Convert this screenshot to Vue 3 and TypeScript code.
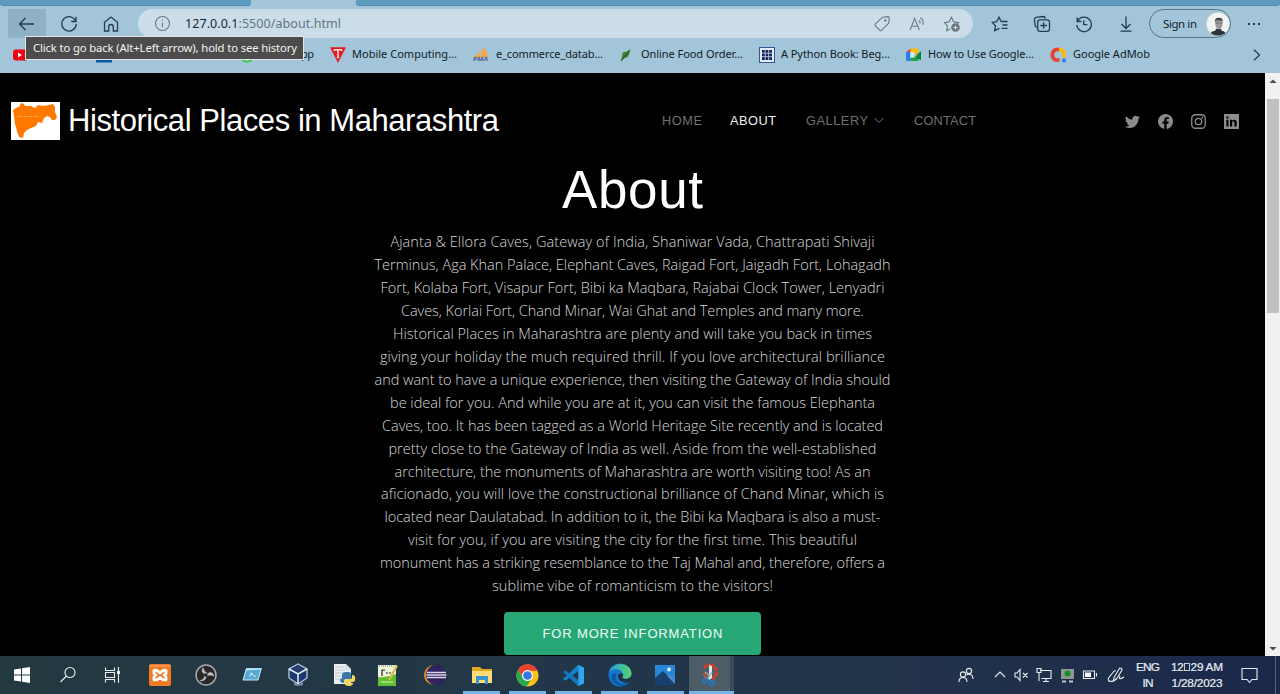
<script setup lang="ts">
import type { Directive } from 'vue'

// Spreads the letters of a text so that it fills the given width in pixels.
const vFit: Directive<HTMLElement, number> = {
  mounted(el, binding) {
    const count = (el.textContent ?? '').trim().length
    const natural = el.getBoundingClientRect().width
    if (count < 2) return
    const spacing = (binding.value - natural) / (count - 1)
    el.style.letterSpacing = `${spacing.toFixed(4)}px`
    el.style.marginRight = `${(-spacing).toFixed(4)}px`
  },
}

interface Line { text: string; width: number }

const lines: Line[] = [
  { text: 'Ajanta & Ellora Caves, Gateway of India, Shaniwar Vada, Chattrapati Shivaji', width: 484 },
  { text: 'Terminus, Aga Khan Palace, Elephant Caves, Raigad Fort, Jaigadh Fort, Lohagadh', width: 516 },
  { text: 'Fort, Kolaba Fort, Visapur Fort, Bibi ka Maqbara, Rajabai Clock Tower, Lenyadri', width: 504 },
  { text: 'Caves, Korlai Fort, Chand Minar, Wai Ghat and Temples and many more.', width: 463 },
  { text: 'Historical Places in Maharashtra are plenty and will take you back in times', width: 479 },
  { text: 'giving your holiday the much required thrill. If you love architectural brilliance', width: 505 },
  { text: 'and want to have a unique experience, then visiting the Gateway of India should', width: 516 },
  { text: 'be ideal for you. And while you are at it, you can visit the famous Elephanta', width: 485 },
  { text: 'Caves, too. It has been tagged as a World Heritage Site recently and is located', width: 501 },
  { text: 'pretty close to the Gateway of India as well. Aside from the well-established', width: 488 },
  { text: 'architecture, the monuments of Maharashtra are worth visiting too! As an', width: 476 },
  { text: 'aficionado, you will love the constructional brilliance of Chand Minar, which is', width: 503 },
  { text: 'located near Daulatabad. In addition to it, the Bibi ka Maqbara is also a must-', width: 496 },
  { text: 'visit for you, if you are visiting the city for the first time. This beautiful', width: 449 },
  { text: 'monument has a striking resemblance to the Taj Mahal and, therefore, offers a', width: 505 },
  { text: 'sublime vibe of romanticism to the visitors!', width: 281 },
]
</script>

<template>
  <div class="screen">
    <div class="tabs"><i></i><b></b><i></i></div>

    <header class="toolbar">
      <div class="cell back">
        <svg width="18" height="18" viewBox="0 0 18 18" class="ln"><path d="M7.500 3 1.500 9l6 6M1.500 9H16" /></svg>
      </div>
      <div class="cell">
        <svg width="18" height="18" viewBox="0 0 18 18" class="ln"><path d="M15.700 6.200A7.200 7.200 0 1 0 16.200 9M16 1.800v4.700h-4.700" /></svg>
      </div>
      <div class="cell">
        <svg width="18" height="18" viewBox="0 0 18 18" class="ln"><path d="M2.500 7.300 9 2l6.500 5.300V16H11.300v-4.200a2.300 2.300 0 0 0-4.600 0V16H2.500z" /></svg>
      </div>
      <div class="address">
        <svg class="gr info" width="17" height="17" viewBox="0 0 17 17"><circle cx="8.500" cy="8.500" r="7" /><path d="M8.500 7.500v4.700M8.500 4.500v1.300" /></svg>
        <span class="url"><span v-fit="156"><em>127.0.0.1</em>:5500/about.html</span></span>
        <div class="abtns">
          <svg class="gr" width="18" height="18" viewBox="0 0 18 18"><path d="M9.600 2.200 15 1.600q1.300 0 1.300 1.300l-.6 5.300-7 7q-1 .9-2 0L2.400 10.900q-.9-1 0-2z" /><circle cx="12.300" cy="5.600" r=".7" /></svg>
          <svg class="gr" width="18" height="18" viewBox="0 0 18 18"><path d="M2 15 6.700 3.500 11.400 15M3.600 11.200h6.200M11 5.500q1.500 1.300 1 3.200M12.300 2.700q4 2.600 2.500 7" /></svg>
          <svg class="gr" width="18" height="18" viewBox="0 0 18 18"><path d="M7 14 3.700 15.700l.7-4.700L1.500 7.600l4.600-.7L8.500 2.300l2.300 4.600 4.800.7-1.200 1.200" /><circle cx="12.500" cy="12.500" r="4.300" fill="#6b747a" stroke="none" /><path d="M12.500 10.500v4M10.500 12.500h4" stroke="#dce8ef" /></svg>
        </div>
      </div>
      <div class="right">
        <svg class="ln" width="18" height="18" viewBox="0 0 18 18"><path d="M10.200 6.800 8 2.200 5.700 6.700l-4.500.7 3.300 3.400-.8 4.900 4.700-2.400M10.500 6.500H16.500M11.500 10h5M10.500 13.300h6" /></svg>
        <svg class="ln" width="18" height="18" viewBox="0 0 18 18"><path d="M4 12.500Q2.500 12 2.200 10.600L1.400 5Q1.300 2.700 3.200 2.300L9.700 1.500Q12 1.500 12.500 3.500" /><rect x="4.700" y="4.800" width="11.800" height="11.600" rx="2.300" /><path d="M10.600 7.200v6.600M7.300 10.500h6.600" /></svg>
        <svg class="ln" width="18" height="18" viewBox="0 0 18 18"><path d="M2.200 2.500v4h4M2.500 6.200A7.300 7.300 0 1 1 1.800 10M8.800 5.200v4.400h3.600" /></svg>
        <svg class="ln" width="18" height="18" viewBox="0 0 18 18"><path d="M9 1.500v12M4.500 9 9 13.500 13.500 9M3.500 16.200h11" /></svg>
      </div>
      <div class="signin">
        <span v-fit="34">Sign in</span>
        <svg width="24" height="24" viewBox="0 0 24 24">
          <defs><clipPath id="face"><circle cx="12" cy="12" r="11.500" /></clipPath></defs>
          <circle cx="12" cy="12" r="11.500" fill="#f3f3f1" />
          <g clip-path="url(#face)"><path d="M4 24q0-5 5-5l1-2h5l1 2q4 0 4 5z" fill="#30343a" /><path d="M9 9q0-3 4-3 3.600.3 3.400 3.500V13q-.6 4-3.200 4.500Q10 17 9.400 13z" fill="#999b9c" /><path d="M8.800 10Q8.500 6 12.500 5.800q4.300-.4 4.500 4l-1-1.300-6-.2z" fill="#40464a" /><path d="M10.500 11h2m1.700 0h2" stroke="#5b6064" /></g>
        </svg>
      </div>
      <div class="dots"><u></u><u></u><u></u></div>
    </header>

    <nav class="bookmarks">
      <span class="bi"><svg width="16" height="16" viewBox="0 0 16 16"><rect x="2" y="2.500" width="15" height="11" rx="3" fill="#f00012" /><path d="M7 5.500v5l4-2.500z" fill="#fff" /></svg></span>
      <span></span>
      <span class="bi"><svg width="16" height="16" viewBox="0 0 16 16"><rect width="16" height="15.500" rx="1" fill="#0b58a9" /></svg></span>
      <span></span>
      <span class="bi"><svg width="16" height="16" viewBox="0 0 16 16"><circle cx="7" cy="8" r="7.500" fill="#35c34a" /><circle cx="7" cy="8" r="5.500" fill="#fff" /></svg></span>
      <span class="bt end"><span v-fit="13">pp</span></span>
      <span class="bi"><svg width="16" height="16" viewBox="0 0 16 16"><path d="M0 .2h16L8 16z" fill="#e91925" /><path d="M4.500 4V2.800h7V4M8 3v7.500M6.800 10.500h2.400" fill="none" stroke="#ffdcda" stroke-width="1.500" /></svg></span>
      <span class="bt"><span v-fit="105">Mobile Computing...</span></span>
      <span class="bi"><svg width="17" height="16" viewBox="0 0 17 16"><path d="M2 9Q5 8 7 4v5zM8 9Q7 5 10 1q4 2 5 8z" fill="#efaa4b" /><path d="M1 9.500h14" stroke="#e79e48" /><text x="0" y="14.300" font-size="5.500" font-style="italic" font-weight="bold" fill="#50628b" textLength="15" lengthAdjust="spacingAndGlyphs">PMA</text></svg></span>
      <span class="bt"><span v-fit="107">e_commerce_datab...</span></span>
      <span class="bi leaf"><svg width="16" height="16" viewBox="0 0 16 16"><path d="M4 9.500Q4 4 8 5L12.500 2 11 7.500Q11 10 7 11L3 14z" fill="#3f8136" /><path d="m3 14 8-10" stroke="#205621" /></svg></span>
      <span class="bt"><span v-fit="102">Online Food Order...</span></span>
      <span class="bi"><svg width="16" height="16" viewBox="0 0 16 16"><rect x=".5" y=".5" width="15" height="15" fill="#e5eef8" stroke="#345493" /><path d="M3 3h10v10H3z" fill="#17255e" /><path d="M6.200 3v10M9.700 3v10M3 6.200h10M3 9.700h10" stroke="#d3deee" stroke-width=".8" /></svg></span>
      <span class="bt"><span v-fit="109">A Python Book: Beg...</span></span>
      <span class="bi"><svg width="16" height="16" viewBox="0 0 16 16"><path d="M0 5h4.500v9H1.500Q0 14 0 12.500z" fill="#2581ef" /><path d="M4.500 1.500V5H0z" fill="#e94335" /><path d="M4.500 1.500H11q1.500 0 1.500 1.500v5L8 5.500H4.500z" fill="#f9bc05" /><path d="M4.500 10.500H8l4.500-3v5Q12.500 14 11 14H4.500z" fill="#23a64c" /><path d="m10.500 8 4.500-4v9.500L10.500 11z" fill="#118438" /><path d="M4.500 5H8v5.500H4.500z" fill="#dfeaef" /></svg></span>
      <span class="bt"><span v-fit="106">How to Use Google...</span></span>
      <span class="bi"><svg width="17" height="16" viewBox="0 0 17 16"><path d="M9.500 2.500Q4 1.500 2.700 6 1.500 11 5.500 13h4" fill="none" stroke="#e64335" stroke-width="3.700" /><path d="M9 2.500q5 0 5 5v3" fill="none" stroke="#fabb05" stroke-width="3.600" /><circle cx="14" cy="13.500" r="2.200" fill="#4285e9" /></svg></span>
      <span class="bt"><span v-fit="77">Google AdMob</span></span>
      <svg class="ln more" width="10" height="14" viewBox="0 0 10 14"><path d="m2 1.800 5.500 5.200L2 12.200" /></svg>
    </nav>
    <div class="tooltip"><span v-fit="264">Click to go back (Alt+Left arrow), hold to see history</span></div>

    <div class="view">
      <main class="page">
        <div class="site">
          <svg class="map" width="49" height="38" viewBox="0 0 49 38"><path fill="#fff" d="M0 0h49v38H0z" /><path d="m9 3 1-2 3 1 1 2 6 0 4 2 3-3 5 1 6-1 4-1 2 3 0 5 2 5-2 3-3 0-2-3-3-1-3 2-2 5-4-1-2 4-5 2-4 2-3 3-1 5-4-1-2-6-2-7-1-8-1-6 3-2 4-2z" fill="#ff7900" /><path d="M7 14.500h20" stroke="#ffad60" stroke-dasharray="2 1" /></svg>
          <h1><span v-fit="431">Historical Places in Maharashtra</span></h1>
          <ul class="menu">
            <li><span v-fit="40">HOME</span></li>
            <li class="on"><span v-fit="46">ABOUT</span></li>
            <li><span v-fit="62">GALLERY</span></li>
            <li><svg width="12" height="9" viewBox="0 0 12 9"><path d="m1.500 2 4.500 4.500L10.500 2" fill="none" stroke="#777" stroke-width="1" /></svg></li>
            <li><span v-fit="62">CONTACT</span></li>
          </ul>
          <div class="social">
            <svg width="15" height="15" viewBox="0 0 16 16"><path d="M5 15c6 0 9.300-5 9.300-9.300v-.4A6.700 6.700 0 0 0 16 3.500a6.600 6.600 0 0 1-1.900.5 3.300 3.300 0 0 0 1.400-1.800 6.500 6.500 0 0 1-2 .8 3.300 3.300 0 0 0-5.600 3A9.300 9.300 0 0 1 1.100 2.500a3.300 3.300 0 0 0 1 4.400 3.200 3.200 0 0 1-1.500-.4 3.300 3.300 0 0 0 2.700 3.200 3.200 3.200 0 0 1-1.500.1 3.300 3.300 0 0 0 3.100 2.300A6.600 6.600 0 0 1 0 13.600 9.300 9.300 0 0 0 5 15" /></svg>
            <svg width="15" height="15" viewBox="0 0 16 16"><path d="M16 8a8 8 0 1 0-9.300 7.900v-5.600h-2V8h2V6.300c0-2 1.200-3.100 3-3.100.9 0 1.800.2 1.800.2v2h-1c-1 0-1.300.6-1.300 1.200V8h2.200l-.4 2.300H9.200v5.600A8 8 0 0 0 16 8" /></svg>
            <svg class="insta" width="15" height="15" viewBox="0 0 16 16"><rect x=".8" y=".8" width="14.400" height="14.400" rx="3.800" /><circle cx="8" cy="8" r="3.400" /><circle class="fill" cx="12.200" cy="3.900" r=".9" /></svg>
            <svg width="15" height="15" viewBox="0 0 16 16"><path fill-rule="evenodd" d="M0 0h16v16H0zM2.500 6.200v7.200h2.300V6.200zM3.650 2.400a1.250 1.250 0 1 0 0 2.500 1.250 1.250 0 0 0 0-2.500M6.400 6.200v7.200h2.300V9.500c0-2 2.400-2 2.400 0v3.900h2.400V8.700c0-3.100-3.500-3.400-4.800-1.500v-1z" /></svg>
          </div>
        </div>

        <h2><span v-fit="141">About</span></h2>
        <div class="copy">
          <div v-for="line in lines" :key="line.text" class="line"><span v-fit="line.width">{{ line.text }}</span></div>
        </div>
        <div class="button"><span v-fit="180">FOR MORE INFORMATION</span></div>
      </main>
      <aside class="scroll">
        <svg width="15" height="26" viewBox="0 0 15 26"><path d="m4.300 10 3.700-3.500 3.700 3.500z" fill="#505050" /></svg>
        <div class="thumb"></div>
        <svg class="down" width="15" height="15" viewBox="0 0 15 15"><path d="m4.300 6 3.700 3.500L11.700 6z" fill="#505050" /></svg>
      </aside>
    </div>

    <footer class="taskbar">
      <div class="apps">
        <div><svg width="16" height="16" viewBox="0 0 16 16"><path d="m0 2.400 7-1v6H0zM8 1.200 16 0v7.400H8zM0 8.400h7v6l-7-1zM8 8.400h8V16l-8-1.200z" fill="#fff" /></svg></div>
        <div><svg class="wh" width="18" height="18" viewBox="0 0 18 18"><circle cx="11" cy="6.500" r="5" /><path d="m7.500 10-6 6" /></svg></div>
        <div class="tv"><svg class="wh" width="18" height="18" viewBox="0 0 18 18"><path d="M2.500 1.500v3h9v-3M2.500 16.500v-3h9v3M2.500 6.500h9v5h-9zM15.500 1v16" /><path d="M14 5h3v3h-3z" fill="#eee" stroke="none" /></svg></div>
        <div><svg width="24" height="24" viewBox="0 0 24 24"><rect x="1" y="1" width="22" height="22" rx="2" fill="#f17824" /><path d="M1.500 3h21" stroke="#ffb37b" /><path d="M6 7.500h3L12 10l3-2.500h3v3.200L16 12l2 1.700v3.200h-3L12 14.500l-3 2.400H6v-3.200L8 12l-2-1.500z" fill="none" stroke="#fff" stroke-width="2.800" stroke-linejoin="round" /></svg></div>
        <div><svg width="22" height="22" viewBox="0 0 22 22"><circle cx="11" cy="11" r="10" fill="#29282a" stroke="#aaa" stroke-width="1.500" /><path d="M11 10Q5 9 8 3.500 9 8 12 9zM12 10q5-4 7 2-4-2-7 0M11 11q1 6-6 6 5-2 5-6" fill="#c7c5c5" stroke="#c7c5c5" stroke-width=".5" /><circle cx="11" cy="11" r="1.700" fill="#29282a" /></svg></div>
        <div><svg width="22" height="20" viewBox="0 0 22 20"><path d="M5 3h16l-4 12H2z" fill="#a8dbf4" /><path d="m5 5 15-1-3 11H2z" fill="#5ba7d4" stroke="#bae6f6" /><path d="m9 8 3 1-4 2m4 0h3" fill="none" stroke="#d0effc" /></svg></div>
        <div><svg width="22" height="24" viewBox="0 0 22 24"><path d="M11 1 2 6v9l9 6 9-6V6z" fill="#1d3970" stroke="#b3c6dc" stroke-width="1.300" /><path d="m2 6 9 5 9-5M11 11v10" fill="none" stroke="#e6f2fa" stroke-width="1.500" /><path d="m5 5.800 6-3 6 3-6 3z" fill="#293f6b" /><path d="M7 19v3l4 1 5-1v-3l-5 3z" fill="#7a8da9" /></svg></div>
        <div><svg width="24" height="24" viewBox="0 0 24 24"><path d="M2 1h12l5 5v15H2z" fill="#eceff1" /><path d="M14 1v5h5M3 4h9M3 7h10M3 10h10M3 13h7M3 16h7" stroke="#bcc6ce" fill="none" /><path d="M10 16v-4q0-3 4-3h3q2 0 2 3v4h-5q-2 0-2 2v2q-4 0-4-3 0-2 4-2z" fill="#3a78a9" /><path d="M20 12q4 0 3 5 0 2-4 2h-3v1h5q0 3-4 3-5 0-5-4 0-3 3-3h4q1 0 1-2z" fill="#f7d55a" /></svg></div>
        <div class="npp"><svg width="22" height="24" viewBox="0 0 22 24"><path d="M1 2h18v21H1z" fill="#eef5d8" /><path d="M1 14q9 1 18-3v12H1z" fill="#62bd31" /><path d="M2 3h15" stroke="#6c756a" stroke-dasharray="1 1" /><path d="M5 13V7h3m1 3h2m1 0h2" fill="none" stroke="#222" stroke-width="1.200" /><path d="m12 15 7-13 2 1-7 13-3 2z" fill="#d9bc4e" /><path d="M4 19h12" stroke="#d9f4c8" /></svg></div>
        <div><svg width="23" height="22" viewBox="0 0 23 22"><circle cx="10" cy="11" r="10" fill="#e88b35" /><circle cx="12.500" cy="11" r="10" fill="#30235f" stroke="#263044" /><path d="M3 8.500h19M2.500 11h20M3 13.500h19" stroke="#ddd6eb" stroke-width="1.500" /></svg></div>
        <div class="open"><svg width="22" height="20" viewBox="0 0 22 20"><path d="M1 2h8l2 2h10v5H1z" fill="#e5a71f" /><path d="M1 6h20v12H1z" fill="#ffdc78" /><path d="M5 19v-8h12v8h-3v-4H8v4z" fill="#3c94cf" /></svg></div>
        <div class="open"><svg width="23" height="23" viewBox="0 0 24 24"><circle cx="12" cy="12" r="11.500" fill="#fbc116" /><path d="M2 6.300a11.500 11.500 0 0 1 20.500.7H12a5 5 0 0 0-4.700 6.800z" fill="#e94335" /><path d="M2 6.300A11.500 11.500 0 0 0 11 23.500l5.500-8.500a5 5 0 0 1-9.200-.8z" fill="#29a852" /><circle cx="12" cy="12" r="5.700" fill="#fff" /><circle cx="12" cy="12" r="4.500" fill="#3977e8" /></svg></div>
        <div class="open"><svg width="23" height="23" viewBox="0 0 24 24"><path d="M17 .8v6.400L3.500 17.500 1 15.700z" fill="#1184ce" /><path d="M17 23.200v-6.400L3.500 6.500 1 8.300z" fill="#1674b8" /><path d="m17 .8 6 3v16.400l-6 3z" fill="#30a5f1" /></svg></div>
        <div class="open"><svg width="24" height="24" viewBox="0 0 24 24"><defs><linearGradient id="edge"><stop stop-color="#209cdf" /><stop offset="1" stop-color="#5bd46a" /></linearGradient></defs><circle cx="12" cy="12" r="11.500" fill="#1479cc" /><path d="M1 10C3-2 22-2 23.500 10c0 5-5 7-9 5-1-.8 1-1 .5-4C13.500 5 4 5 1 10" fill="url(#edge)" /><path d="M8.500 11c-3 6 3 12 12 9-6 6-16 2-17-5-.3-4 2-6 5-4" fill="#0c59a4" /><path d="M14.500 15c3 2 8 1 9-3l.5 4-3 3.200C15 21 9 17 10 12q1.500-3 5-1c.5 2.500-1.300 3-.5 4" fill="#22343f" /></svg></div>
        <div class="open photos"><svg width="22" height="22" viewBox="0 0 22 22"><path d="M1 1h20v20H1z" fill="#2786da" /><path d="M1 14 9 7l12 12v2H1z" fill="#173f70" /><path d="m13 12 2-2 6 6v4z" fill="#5688c0" /><circle cx="15" cy="5.500" r="1.900" fill="#edf8ff" /></svg></div>
        <div class="open active"><svg width="24" height="24" viewBox="0 0 24 24"><path d="M6 4.500Q10 1 14 2.500q5 2 4.500 7Q18 14 14 15.500" fill="none" stroke="#c5432d" stroke-width="3.500" stroke-dasharray="5 .7" /><path d="m11 2 3 1v12l-3 2z" fill="#e4e7e9" /><path d="m7 9 5 4m2-4-5 8" stroke="#9eb4c6" stroke-width="1.500" /><circle cx="7" cy="17.500" r="2" fill="none" stroke="#2877be" stroke-width="2" /><circle cx="14" cy="20" r="2.200" fill="none" stroke="#2877be" stroke-width="2" /><path d="M5 11h4M6 14h3" stroke="#c65035" stroke-width="2" /></svg></div>
      </div>
      <div class="tray">
        <svg class="wh" width="16" height="16" viewBox="0 0 16 16"><circle cx="5" cy="7.500" r="2.600" /><path d="M1 15q0-4.500 4-4.500T9 15" /><circle cx="11" cy="4" r="2.600" /><path d="M8.500 7.600Q15 6 15 12" /></svg>
        <svg class="wh chev" width="14" height="14" viewBox="0 0 14 14"><path d="m2 9 5-5 5 5" /></svg>
        <svg class="wh" width="15" height="14" viewBox="0 0 15 14"><path d="M1 5h2l3-3.500v11L3 9H1zM9 5l4.500 4.500M13.500 5 9 9.500" /></svg>
        <svg class="wh" width="16" height="16" viewBox="0 0 16 16"><path d="M4 3.500h11v8H5.500M10 11.500v3M7 14.500h6M1 1.500h4v4H1zM3 5.500V14" /></svg>
        <svg width="15" height="15" viewBox="0 0 15 15"><path d="M1 1h13v10H1z" fill="#8f9792" /><circle cx="7.500" cy="5.500" r="3" fill="#129229" /><path d="M2 13.500h4m3 0h4" stroke="#bfc4c4" stroke-width="2" /></svg>
        <svg class="wh" width="16" height="12" viewBox="0 0 16 12"><path d="M1.500 2h11v7.500h-11zM14.500 4v3.500" /><path d="M3 3.500h6V8H3z" fill="#fff" stroke="none" /></svg>
        <svg class="wh" width="18" height="18" viewBox="0 0 18 18"><path d="M7 11.500 12.700 2q2.500 0 2.300 2L9.500 13 6.500 15zM9 5q-2-1-3.500 2l-4 5q-1 3 2 3.500 4 0 6-3M13 10q-2 5 4 1" /></svg>
        <div class="stack"><span v-fit="24">ENG</span><span v-fit="11">IN</span></div>
        <div class="stack clock"><span v-fit="52"><em>12</em><s></s><em>29 AM</em></span><span v-fit="51">1/28/2023</span></div>
        <svg class="wh" width="17" height="17" viewBox="0 0 17 17"><path d="M1 1.500h15v11h-5L8.500 15.500 6 12.500H1z" /></svg>
        <i class="peek"></i>
      </div>
    </footer>
  </div>
</template>

<style>
body { margin: 0; overflow: hidden; background: #000; }
</style>

<style scoped>
.screen { position: relative; width: 1280px; height: 694px; display: flex; flex-direction: column; overflow: hidden; font-family: "Noto Sans", "Open Sans", sans-serif; }
.screen * { box-sizing: border-box; }
svg { display: block; flex: none; }
span { white-space: nowrap; }
.tabs { display: grid; grid-template-columns: 251px 105px 1fr; height: 6px; background: #a3c5da; flex: none; }
.tabs i { background: #5e9bc0; border-bottom: 1px solid #528bad; border-radius: 0 0 3px 3px; height: 6px; }
.toolbar { height: 36px; background: #a3c5da; display: grid; grid-template-columns: 38px 46px 38px 835px 16px 160px 8px 82px 12px 20px; padding: 3px 0 4px 8px; align-items: center; flex: none; }
.cell { display: flex; justify-content: center; align-items: center; height: 29px; }
.back { background: #8eb1c5; }
.ln { fill: none; stroke: #263d4b; stroke-width: 1.3; }
.gr { fill: none; stroke: #6b7b84; stroke-width: 1.1; }
.address { height: 29px; margin-left: 8px; width: 835px; border-radius: 15px; background: #cadde8; display: flex; align-items: center; }
.info { margin-left: 16px; }
.url { width: 674px; margin-left: 14px; font-size: 12.5px; color: #637581; line-height: 20px; }
.url em { font-style: normal; color: #1c2830; }
.abtns { display: flex; gap: 17px; margin-left: 14px; }
.right { grid-column: 6; display: flex; gap: 24px; padding-left: 10px; }
.signin { grid-column: 8; height: 29px; border: 1.5px solid #567386; border-radius: 15px; display: flex; align-items: center; justify-content: space-between; padding: 0 0 0 13px; font-size: 11.5px; color: #13222b; }
.dots { grid-column: 10; display: flex; gap: 3px; padding-left: 5px; }
.dots u { width: 2px; height: 2px; background: #263d4b; }
.bookmarks { height: 31px; flex: none; background: #a3c5da; padding: 5px 0 0 11px; display: grid; grid-template-columns: 84px 1px 143px 1px 22px 68px 22px 121px 23px 119px 26px 118px 22px 125px 22px 122px 23px 179px 12px; }
.bookmarks > * { height: 16px; }
.bi { display: flex; }
.leaf { padding-left: 3px; }
.bt { font-size: 11px; line-height: 14px; color: #101c24; }
.end { padding-left: 39px; }
.more { margin-top: 0; }
.tooltip { position: absolute; left: 25px; top: 36px; width: 279px; height: 24px; background: #4c4c4c; border: 1px solid #e4e4e4; padding-left: 7px; color: #f3f3f3; font-size: 11.3px; line-height: 21px; }
.view { height: 583px; display: flex; flex: none; }
.page { width: 1265px; background: #000; display: flex; flex-direction: column; }
.site { height: 90px; flex: none; display: flex; padding: 29px 0 0 11px; font-family: "Liberation Sans", Arial, sans-serif; }
h1 { width: 594px; margin: 0 0 0 8px; font-size: 31px; line-height: 37px; color: #fff; font-weight: 400; }
.menu { list-style: none; padding: 0; margin: 0; display: grid; grid-template-columns: 68px 76px 67px 41px 211px; font-size: 12.8px; line-height: 37px; color: #707070; }
.menu svg { margin-top: 14px; }
.menu .on { color: #f2f2f2; }
.social { display: flex; gap: 18px; padding-top: 11.5px; margin-left: -.5px; }
.social svg { fill: #8c8c8c; }
.social .insta { fill: none; stroke: #8c8c8c; stroke-width: 1.4; }
.social .insta .fill { fill: #8c8c8c; stroke: none; }
h2 { margin: 0; height: 68px; text-align: center; font: 400 53px/54px "Liberation Sans", Arial, sans-serif; color: #fff; }
.copy { font-family: "Open Sans", "Noto Sans", sans-serif; font-weight: 300; font-size: 14.5px; color: #d8d8d8; padding-top: .3px; }
.line { height: 22.93px; line-height: 22.93px; text-align: center; }
.button { width: 257px; height: 43px; margin: 13.8px 0 0 504px; border-radius: 4px; background: #27a776; color: #edfff7; text-align: center; font: 13px/43px "Liberation Sans", Arial, sans-serif; flex: none; }
.scroll { width: 15px; background: #f1f1f1; display: flex; flex-direction: column; }
.thumb { height: 214px; width: 12px; margin-left: 2px; background: #c1c1c1; }
.down { margin-top: auto; }
.taskbar { height: 38px; background: linear-gradient(90deg, #233940, #22364a 50%, #22334a 70%, #1b294b); display: flex; justify-content: space-between; flex: none; }
.apps { display: grid; grid-template-columns: 45px 46px 46px repeat(13, 46px); }
.apps > div { display: flex; align-items: center; justify-content: center; padding: 0 1px 0 0; }
.apps .tv, .apps .npp { padding-right: 4px; }
.apps .open { background: linear-gradient(#75b4e5, #75b4e5) 4px 100% / 37px 3px no-repeat; }
.apps .photos { padding-right: 2px; }
.apps .active { width: 45px; padding-right: 3px; background: linear-gradient(#75b4e5, #75b4e5) 0 100% / 45px 3px no-repeat, linear-gradient(90deg, #4d5d68 41px, #384b5a 41px); }
.wh { fill: none; stroke: #e9edef; stroke-width: 1.1; }
.tray { width: 326px; display: grid; grid-template-columns: 24px 34px 18px 28px 18px 28px 24px 40px 58px 46px; align-items: center; justify-items: center; position: relative; color: #e9edf1; }
.chev { margin-left: 10px; }
.stack { display: flex; flex-direction: column; align-items: center; font: 11.8px/16.5px "Liberation Sans", Arial, sans-serif; -webkit-text-stroke: .2px; }
.stack em { font-style: normal; }
.stack s { display: inline-block; width: 6px; height: 8px; margin: 0 1px 0 0; border: 1px solid #c9ced6; }
.peek { position: absolute; right: 4px; top: 0; width: 1px; height: 38px; background: #54627a; }
</style>
